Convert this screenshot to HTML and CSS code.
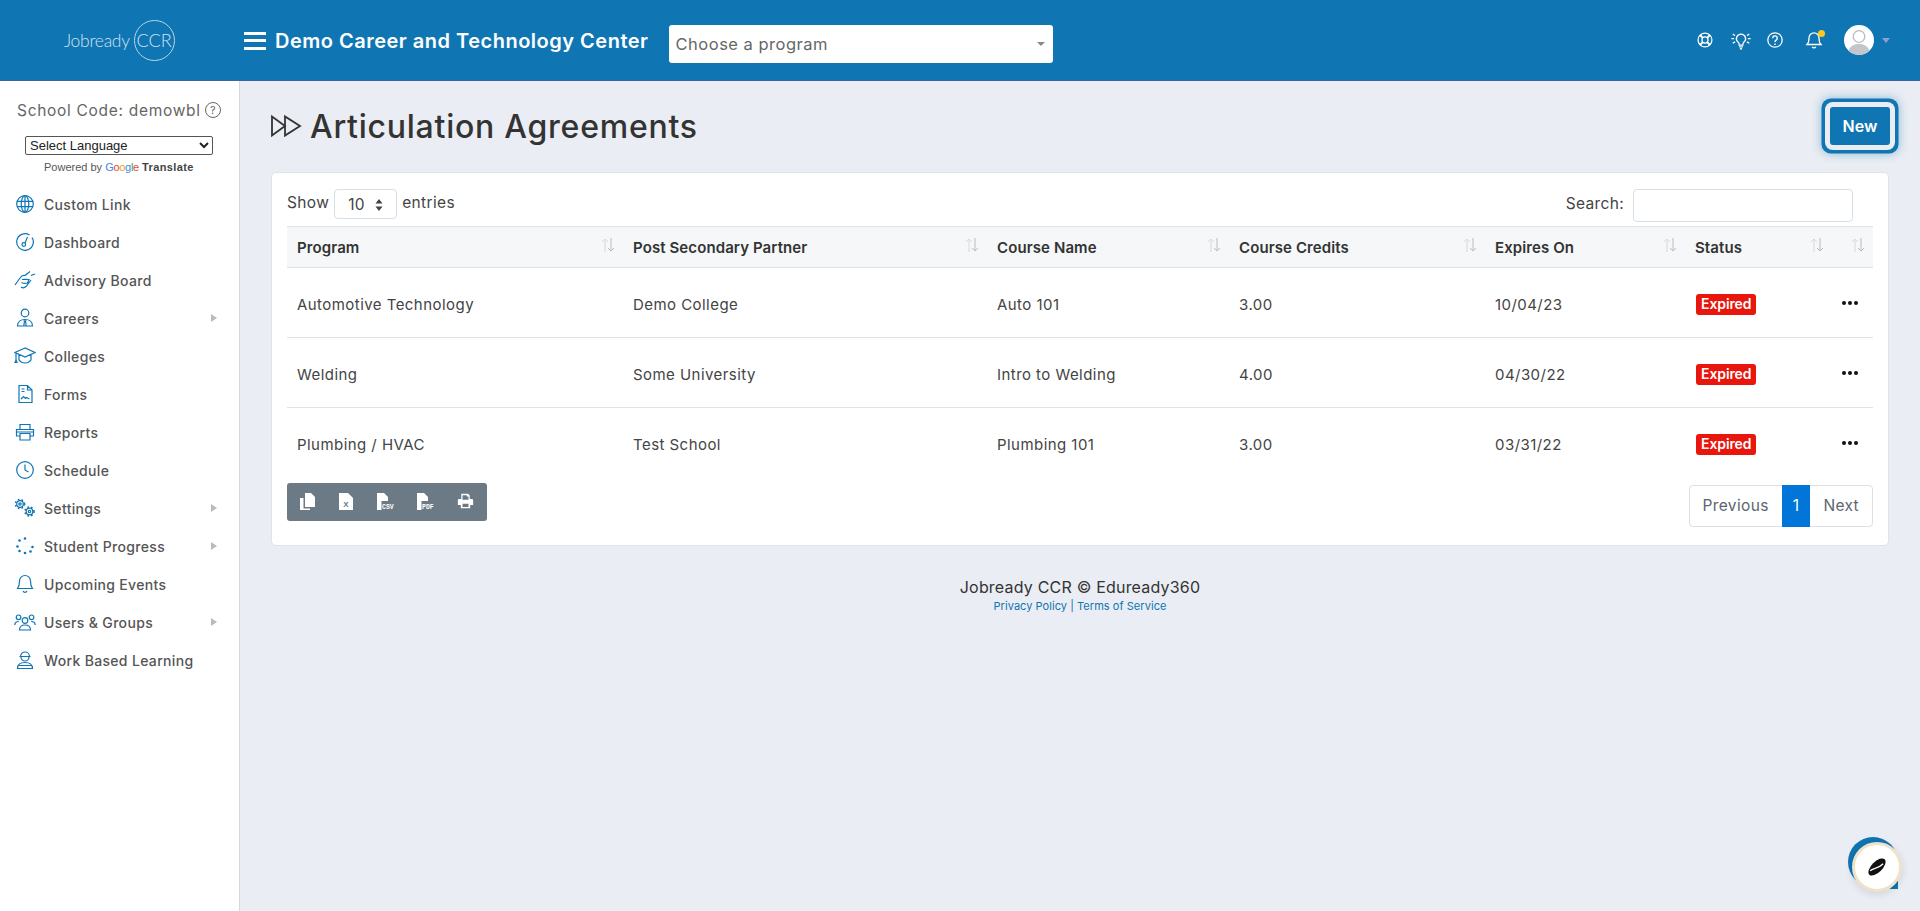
FILE: index.html
```html
<!DOCTYPE html>
<html lang="en">
<head>
  <meta charset="UTF-8">
  <meta name="viewport" content="width=device-width, initial-scale=1.0">
  <title>Articulation Agreements</title>
  <link rel="stylesheet" href="styles.css">
</head>
<body>
  <svg class="defs" width="0" height="0">
    <symbol id="sort" viewBox="0 0 14 16"><path class="sort-up" d="M4 15V2M1 5 4 2l3 3"/><path class="sort-down" d="M10 1v13M7 11l3 3 3-3"/></symbol>
    <symbol id="caret" viewBox="0 0 6 8"><path d="M0 0l6 4-6 4z"/></symbol>
  </svg>

  <header class="topbar">
    <div class="logo">
      <span class="logo-name">Jobready</span>
      <span class="logo-ring">CCR</span>
    </div>
    <div class="hamburger"><span></span><span></span><span></span></div>
    <h1 class="school-name">Demo Career and Technology Center</h1>
    <div class="program-select">
      <span>Choose a program</span>
      <i class="down"></i>
    </div>
    <div class="top-icons">
      <svg class="top-icon" viewBox="0 0 20 20"><circle cx="10" cy="10" r="7.700"/><circle cx="10" cy="10" r="3.400"/><path d="M4.600 4.600l3 3M15.400 4.600l-3 3M4.600 15.400l3-3M15.400 15.400l-3-3" stroke-width="2.200"/></svg>
      <svg class="top-icon bulb" viewBox="0 0 24 20"><path d="M12 3a5 5 0 0 0-3 9c.8.700 1 1.500 1 3h4c0-1.500.2-2.300 1-3a5 5 0 0 0-3-9zM10 17h4M10.800 19h2.400M3 3l2.500 1.500M1.500 8h3M3 13l2.500-1.500M21 3l-2.500 1.500M22.500 8h-3M21 13l-2.500-1.500"/></svg>
      <svg class="top-icon" viewBox="0 0 20 20"><circle cx="10" cy="10" r="8"/><path d="M7.500 8a2.500 2.500 0 1 1 3.800 2.100c-.9.600-1.300 1-1.300 2" stroke-width="1.600"/><path d="M10 14v1.500" stroke-width="1.600"/></svg>
      <span class="bell-wrap">
        <svg class="top-icon" viewBox="0 0 20 20"><path d="M10 2a5.500 5.500 0 0 0-5.500 5.500c0 4-.8 6-2.300 7.500h15.600c-1.500-1.500-2.300-3.500-2.300-7.500A5.500 5.500 0 0 0 10 2zM8 17.500a2.200 2.200 0 0 0 4 0"/></svg>
        <i class="bell-dot"></i>
      </span>
      <span class="avatar">
        <svg viewBox="0 0 30 30"><circle cx="15" cy="15" r="15" fill="#fff"/><circle cx="15" cy="11.500" r="5.800" fill="none" stroke="#b9bcc0" stroke-width="1.300"/><path d="M4.500 25.500c2-5 6-6.500 10.500-6.500s8.500 1.500 10.500 6.500A15 15 0 0 1 15 30a15 15 0 0 1-10.500-4.500z" fill="#c3c6ca"/></svg>
      </span>
      <i class="avatar-caret"></i>
    </div>
  </header>

  <div class="layout">
    <aside class="sidebar">
      <div class="school-code">School Code: demowbl <span class="q-mark">?</span></div>
      <select class="lang-select"><option>Select Language</option></select>
      <div class="powered">Powered by <span class="google"><span class="g-b">G</span><span class="g-r">o</span><span class="g-y">o</span><span class="g-b">g</span><span class="g-g">l</span><span class="g-r">e</span></span> <b class="translate">Translate</b></div>
      <nav class="side-nav">
        <a class="nav-item">
          <svg class="nav-icon" viewBox="0 0 22 20"><circle cx="11" cy="10" r="8.300"/><ellipse cx="11" cy="10" rx="3.800" ry="8.300"/><path d="M3 7.300h16M3 12.700h16M11 1.700v16.600"/></svg>
          Custom Link</a>
        <a class="nav-item">
          <svg class="nav-icon" viewBox="0 0 22 20"><path d="M15.500 3A8.300 8.300 0 1 0 18 5.500"/><circle cx="9.800" cy="12.500" r="1.800"/><path d="M11 11 13.500 5"/></svg>
          Dashboard</a>
        <a class="nav-item">
          <svg class="nav-icon" viewBox="0 0 22 20"><path d="M1 15 6 8c1-1.500 3-3 5-2.500l5-4M7 17c2 1.500 4 .5 5.500-1L17 10M8 9.500c2-.5 4 0 7 0l-1.500 3.500c-1.500.5-4 .5-6-.5M17 5.500l4-1.500"/></svg>
          Advisory Board</a>
        <a class="nav-item has-sub">
          <svg class="nav-icon" viewBox="0 0 22 20"><circle cx="11" cy="5" r="3.800"/><path d="M3.500 18c0-4 3-6.500 7.500-6.500s7.500 2.500 7.500 6.500zM9.500 11.500l1.500 2 1.500-2M9.800 18l.6-4.500h1.200l.6 4.500"/></svg>
          Careers<svg class="nav-caret"><use href="#caret"/></svg></a>
        <a class="nav-item">
          <svg class="nav-icon" viewBox="0 0 22 20"><path d="M11 2 1 6.500 11 11l10-4.500zM5 8.500V14c1.500 2 3.800 3 6 3s4.500-1 6-3V8.500M2 7v7M1 16.500l1-2.500 1 2.500z"/></svg>
          Colleges</a>
        <a class="nav-item">
          <svg class="nav-icon" viewBox="0 0 22 20"><path d="M5 1.500h8.500L18 6v12.500H5zM13.500 1.500V6H18M7.500 5h3M7.500 7.500h3M7 15l2.500-2.500 2 2 1-1 3 1.500"/></svg>
          Forms</a>
        <a class="nav-item">
          <svg class="nav-icon" viewBox="0 0 22 20"><path d="M6 7V2.500h10V7M6 14H2.500V7.500h17V14H16M6 11.500h10V18H6zM2.500 10h17"/></svg>
          Reports</a>
        <a class="nav-item">
          <svg class="nav-icon" viewBox="0 0 22 20"><circle cx="11" cy="10" r="8.300"/><path d="M11 4.500V10l3.500 2"/></svg>
          Schedule</a>
        <a class="nav-item has-sub">
          <svg class="nav-icon" viewBox="0 0 22 20"><circle cx="6" cy="6" r="3.300"/><circle cx="6" cy="6" r="1.200"/><circle cx="6" cy="6" r="4.500" stroke-width="1.600" stroke-dasharray="1.600 2.100"/><circle cx="15.500" cy="13.500" r="3.300"/><circle cx="15.500" cy="13.500" r="1.200"/><circle cx="15.500" cy="13.500" r="4.500" stroke-width="1.600" stroke-dasharray="1.600 2.100"/></svg>
          Settings<svg class="nav-caret"><use href="#caret"/></svg></a>
        <a class="nav-item has-sub">
          <svg class="nav-icon dots" viewBox="0 0 22 20"><circle cx="11" cy="2.500" r="1.300"/><circle cx="5.500" cy="4.500" r="1.300"/><circle cx="3.500" cy="10.500" r="1.300"/><circle cx="18.500" cy="11" r="1.300"/><circle cx="5.500" cy="15" r="1.300"/><circle cx="16.500" cy="15.500" r="1.300"/><circle cx="11" cy="17" r="1.300"/></svg>
          Student Progress<svg class="nav-caret"><use href="#caret"/></svg></a>
        <a class="nav-item">
          <svg class="nav-icon" viewBox="0 0 22 20"><path d="M11 1.500A5.500 5.500 0 0 0 5.500 7c0 4-.8 6-2 7.500h15c-1.200-1.500-2-3.500-2-7.500A5.500 5.500 0 0 0 11 1.500zM9 17a2.200 2.200 0 0 0 4 0"/></svg>
          Upcoming Events</a>
        <a class="nav-item has-sub">
          <svg class="nav-icon" viewBox="0 0 22 20"><circle cx="11" cy="8.500" r="2.800"/><path d="M5.500 18c0-3.500 2-5 5.500-5s5.500 1.500 5.500 5zM4.500 3a2.300 2.300 0 1 0 .1 4.600A2.300 2.300 0 0 0 4.500 3zM17.500 3a2.300 2.300 0 1 0 .1 4.600A2.300 2.300 0 0 0 17.500 3zM.800 13c0-2 1.500-3.500 4-3.500M21.200 13c0-2-1.500-3.500-4-3.500"/></svg>
          Users &amp; Groups<svg class="nav-caret"><use href="#caret"/></svg></a>
        <a class="nav-item">
          <svg class="nav-icon" viewBox="0 0 22 20"><path d="M6.500 6.500a4.500 4.500 0 0 1 9 0zM5.500 6.500h11M7 7a4 4 0 0 0 8 0M3.500 18.500c0-4 3-6 7.500-6s7.500 2 7.500 6zM4 15.500h14"/></svg>
          Work Based Learning</a>
      </nav>
    </aside>

    <main class="content">
      <div class="page-head">
        <h2 class="page-title">
          <svg class="title-icon" viewBox="0 0 32 24"><path d="M2 2.500v19L15 12zM15 2.500v19L30 12z"/></svg>
          Articulation Agreements
        </h2>
        <button class="new-btn">New</button>
      </div>

      <section class="card">
        <div class="table-tools">
          <label class="entries">Show
            <span class="entries-select">10<svg class="updown" viewBox="0 0 8 12"><path d="M4 0l3.500 4.500h-7zM4 12 .5 7.500h7z"/></svg></span>
            entries</label>
          <label class="search">Search: <input type="text" class="search-input"></label>
        </div>

        <table class="data-table">
          <colgroup>
            <col class="c1"><col class="c2"><col class="c3"><col class="c4"><col class="c5"><col class="c6"><col class="c7">
          </colgroup>
          <thead>
            <tr>
              <th><div class="th-in">Program<svg class="sort"><use href="#sort"/></svg></div></th>
              <th><div class="th-in">Post Secondary Partner<svg class="sort"><use href="#sort"/></svg></div></th>
              <th><div class="th-in">Course Name<svg class="sort"><use href="#sort"/></svg></div></th>
              <th><div class="th-in">Course Credits<svg class="sort"><use href="#sort"/></svg></div></th>
              <th><div class="th-in">Expires On<svg class="sort"><use href="#sort"/></svg></div></th>
              <th><div class="th-in">Status<svg class="sort"><use href="#sort"/></svg></div></th>
              <th><div class="th-in"><svg class="sort"><use href="#sort"/></svg></div></th>
            </tr>
          </thead>
          <tbody>
            <tr>
              <td>Automotive Technology</td><td>Demo College</td><td>Auto 101</td><td>3.00</td><td>10/04/23</td>
              <td><span class="badge">Expired</span></td>
              <td><span class="more"><i></i><i></i><i></i></span></td>
            </tr>
            <tr>
              <td>Welding</td><td>Some University</td><td>Intro to Welding</td><td>4.00</td><td>04/30/22</td>
              <td><span class="badge">Expired</span></td>
              <td><span class="more"><i></i><i></i><i></i></span></td>
            </tr>
            <tr>
              <td>Plumbing / HVAC</td><td>Test School</td><td>Plumbing 101</td><td>3.00</td><td>03/31/22</td>
              <td><span class="badge">Expired</span></td>
              <td><span class="more"><i></i><i></i><i></i></span></td>
            </tr>
          </tbody>
        </table>

        <div class="table-foot">
          <div class="export-btns">
            <svg class="export e-copy" viewBox="0 0 15 17"><path d="M5 0h6l4 4v10H5z"/><path d="M0 5h3.500v10.500H10V17H0z"/></svg>
            <svg class="export e-xls" viewBox="0 0 14 17"><path d="M0 0h9l5 5v12H0z"/><text x="7" y="14" class="x-mark">X</text></svg>
            <svg class="export e-file" viewBox="0 0 16 17"><path d="M0 0h7l4 4v4H4.500v9H0z"/><text x="5" y="15.500" class="file-label">CSV</text></svg>
            <svg class="export e-file" viewBox="0 0 16 17"><path d="M0 0h7l4 4v4H4.500v9H0z"/><text x="5" y="15.500" class="file-label">PDF</text></svg>
            <svg class="export e-print" viewBox="0 0 20 20"><path fill-rule="evenodd" d="M5 1h8l2 2v4h2.500A1.500 1.500 0 0 1 19 8.500V14h-3.500v4h-11v-4H1V8.500A1.500 1.500 0 0 1 2.500 7H5zm1.500 1.500V8h7V4h-2V2.500zm0 10v4h7v-4z"/></svg>
          </div>
          <div class="pager">
            <a class="page-link">Previous</a>
            <a class="page-link active">1</a>
            <a class="page-link">Next</a>
          </div>
        </div>
      </section>

      <footer class="page-foot">
        <div class="copy">Jobready CCR © Eduready360</div>
        <div class="foot-links"><a>Privacy Policy</a> | <a>Terms of Service</a></div>
      </footer>
    </main>
  </div>

  <div class="chat-widget">
    <i class="chat-back"></i>
    <i class="chat-tail"></i>
    <span class="chat-front">
      <svg viewBox="0 0 24 24"><g transform="rotate(45 12 12)"><ellipse cx="12" cy="12" rx="6.500" ry="13"/><path d="M9.500 21c0-5 5-7 5-17" fill="none" stroke="#fff" stroke-width="1.600"/></g></svg>
    </span>
  </div>
</body>
</html>
```
FILE: styles.css
```css
* {
  box-sizing: border-box;
  margin: 0;
  padding: 0;
}

html, body {
  height: 100%;
  overflow: hidden;
}

body {
  font-family: Inter, "Open Sans", sans-serif;
  background-color: #eaedf3;
  color: #333;
  display: flex;
  flex-direction: column;
}

.defs {
  position: absolute;
}

/* top bar */
.topbar {
  height: 81px;
  flex-shrink: 0;
  background-color: #0f75b3;
  border-bottom: 1px solid #3f5fa5;
  display: flex;
  align-items: center;
  color: #fff;
}

.logo {
  width: 244px;
  padding-left: 64px;
  display: flex;
  align-items: center;
  color: #cfe3f0;
  font-family: Lato, sans-serif;
  font-weight: 300;
}

.logo-name {
  font-size: 17.500px;
  letter-spacing: -0.3px;
}

.logo-ring {
  width: 41px;
  height: 41px;
  flex-shrink: 0;
  margin-left: 4px;
  border: 1px solid #b6d5e8;
  border-radius: 50%;
  display: flex;
  align-items: center;
  justify-content: center;
  font-size: 18px;
}

.hamburger {
  width: 22px;
  margin-top: 1px;
  display: flex;
  flex-direction: column;
  gap: 4.500px;
}

.hamburger span {
  height: 3px;
  background-color: #fff;
}

.school-name {
  margin: 2px 0 0 9px;
  font-size: 20px;
  font-weight: 600;
  letter-spacing: 0.5px;
  white-space: nowrap;
}

.program-select {
  width: 384px;
  height: 38px;
  margin: 8px 0 0 20px;
  padding: 0 8px 0 7px;
  background-color: #fff;
  border-radius: 3px;
  color: #666;
  font-size: 16.500px;
  letter-spacing: 0.5px;
  display: flex;
  align-items: center;
  justify-content: space-between;
}

.down {
  width: 0;
  height: 0;
  border-left: 4px solid transparent;
  border-right: 4px solid transparent;
  border-top: 4px solid #888;
}

.top-icons {
  margin-left: auto;
  padding-right: 30px;
  display: flex;
  align-items: center;
}

.top-icon {
  width: 18px;
  height: 18px;
  margin-right: 16px;
  fill: none;
  stroke: #fff;
  stroke-width: 1.400;
  display: block;
}

.top-icon.bulb {
  width: 22px;
  height: 19px;
  margin-right: 14px;
}

.bell-wrap {
  position: relative;
  margin-left: 5px;
  margin-right: 21px;
}

.bell-wrap .top-icon {
  margin-right: 0;
}

.bell-dot {
  position: absolute;
  top: -1px;
  right: -2px;
  width: 7px;
  height: 7px;
  border-radius: 50%;
  background-color: #ffc820;
}

.avatar {
  width: 30px;
  height: 30px;
  display: block;
}

.avatar svg {
  display: block;
}

.avatar-caret {
  width: 0;
  height: 0;
  margin-left: 8px;
  border-left: 4px solid transparent;
  border-right: 4px solid transparent;
  border-top: 5px solid #8f9fd6;
}

.layout {
  flex: 1;
  display: flex;
  min-height: 0;
}

/* sidebar */
.sidebar {
  width: 240px;
  flex-shrink: 0;
  background-color: #fff;
  border-right: 1px solid #d3dae2;
  padding-top: 19px;
}

.school-code {
  padding-left: 17px;
  font-size: 15.500px;
  letter-spacing: 0.7px;
  color: #666;
  display: flex;
  align-items: center;
  gap: 4px;
  white-space: nowrap;
  height: 20px;
}

.q-mark {
  width: 16px;
  height: 16px;
  border: 1px solid #666;
  border-radius: 50%;
  font-size: 11px;
  letter-spacing: 0;
  line-height: 14px;
  text-align: center;
}

.lang-select {
  display: block;
  width: 188px;
  height: 19px;
  margin: 16px 0 0 25px;
  font-family: "Liberation Sans", sans-serif;
  font-size: 13px;
  color: #222;
  background-color: #fff;
  border: 1px solid #555;
  border-radius: 2px;
}

.powered {
  margin: 4px 0 0 0;
  padding-left: 44px;
  font-family: "Liberation Sans", sans-serif;
  font-size: 11px;
  color: #555;
  white-space: nowrap;
  line-height: 16px;
}

.translate {
  color: #444;
  letter-spacing: 0.4px;
}

.google {
  font-weight: 400;
  letter-spacing: -0.3px;
}

.g-b { color: #4285f4; }
.g-r { color: #ea4335; }
.g-y { color: #d4a90a; }
.g-g { color: #34a853; }

.side-nav {
  margin-top: 10px;
  display: flex;
  flex-direction: column;
}

.nav-item {
  height: 38px;
  padding-left: 14px;
  display: flex;
  align-items: center;
  font-size: 14px;
  font-weight: 500;
  letter-spacing: 0.33px;
  color: #555;
  white-space: nowrap;
}

.nav-icon {
  width: 22px;
  height: 20px;
  margin-right: 8px;
  fill: none;
  stroke: #0f75b3;
  stroke-width: 1.200;
  flex-shrink: 0;
}

.nav-icon.dots {
  fill: #0f75b3;
  stroke: none;
}

.nav-caret {
  width: 6px;
  height: 8px;
  margin-left: auto;
  margin-right: 22px;
  fill: #b5bbc2;
}

/* main column */
.content {
  flex: 1;
  min-width: 0;
  padding: 18px 31px 0 31px;
}

.page-head {
  height: 73px;
  display: flex;
  align-items: flex-start;
  justify-content: space-between;
}

.page-title {
  height: 54px;
  margin-left: -1px;
  display: flex;
  align-items: center;
  gap: 8px;
  font-size: 32px;
  font-weight: 500;
  color: #333;
  letter-spacing: 0.75px;
}

.title-icon {
  width: 32px;
  height: 24px;
  fill: none;
  stroke: #333;
  stroke-width: 1.800;
}

.new-btn {
  width: 60px;
  height: 38px;
  margin: 8px -1px 0 0;
  background-color: #0f75b3;
  color: #fff;
  border: none;
  border-radius: 3px;
  font-family: inherit;
  font-size: 16px;
  font-weight: 600;
  box-shadow: 0 0 0 5px #eaedf3, 0 0 0 8.500px #0f75b3, 0 0 10px 9px rgba(15, 117, 179, 0.4);
}

.card {
  height: 374px;
  background-color: #fff;
  border: 1px solid #dde3ea;
  border-radius: 5px;
  padding: 16px 15px 0 15px;
}

.table-tools {
  height: 37px;
  display: flex;
  justify-content: space-between;
  font-size: 15.500px;
  letter-spacing: 0.35px;
  color: #444;
}

.entries {
  display: flex;
  align-items: flex-start;
  gap: 5px;
  line-height: 28px;
}

.entries-select {
  width: 63px;
  height: 30px;
  padding: 1px 13px 0 13px;
  border: 1px solid #d5e0e8;
  border-radius: 4px;
  display: flex;
  align-items: center;
  justify-content: space-between;
}

.updown {
  width: 8px;
  height: 12px;
  fill: #444;
}

.search {
  display: flex;
  align-items: flex-start;
  gap: 9px;
  padding-right: 20px;
  line-height: 30px;
}

.search-input {
  width: 220px;
  height: 33px;
  border: 1px solid #d5e0e8;
  border-radius: 4px;
}

/* table */
.data-table {
  width: 1586px;
  table-layout: fixed;
  border-collapse: collapse;
  font-size: 15px;
  letter-spacing: 0.45px;
}

.c1 { width: 336px; }
.c2 { width: 364px; }
.c3 { width: 242px; }
.c4 { width: 256px; }
.c5 { width: 200px; }
.c6 { width: 147px; }
.c7 { width: 41px; }

.data-table thead tr {
  height: 41px;
  background-color: #f5f7f9;
  border-top: 1px solid #dde3ea;
  border-bottom: 1px solid #dde3ea;
}

.data-table th {
  padding: 0 8px 0 10px;
  font-size: 15px;
  font-weight: 600;
  letter-spacing: 0.1px;
  text-align: left;
  color: #333;
}

.th-in {
  display: flex;
  align-items: center;
  justify-content: space-between;
  white-space: nowrap;
}

.sort {
  width: 14px;
  height: 16px;
  margin-top: -4px;
  margin-left: auto;
  fill: none;
  stroke-width: 1;
  flex-shrink: 0;
}

.sort-up {
  stroke: #d5d9de;
}

.sort-down {
  stroke: #b7bcc2;
}

.data-table tbody tr {
  height: 70px;
  border-bottom: 1px solid #dde3ea;
}

.data-table tbody tr:last-child {
  border-bottom: none;
}

.data-table td {
  padding: 3px 10px 0;
  color: #444;
  white-space: nowrap;
}

.badge {
  display: inline-block;
  margin-left: 1px;
  padding: 0 5px;
  height: 21px;
  line-height: 20px;
  background-color: #e8160c;
  color: #fff;
  font-size: 14px;
  font-weight: 600;
  border-radius: 3px;
  letter-spacing: -0.1px;
}

.more {
  display: flex;
  gap: 2px;
  margin-top: -3px;
}

.more i {
  width: 4px;
  height: 4px;
  border-radius: 50%;
  background-color: #111;
}

.table-foot {
  margin-top: 5px;
  display: flex;
  justify-content: space-between;
}

.export-btns {
  width: 200px;
  height: 38px;
  padding-left: 13px;
  background-color: #6c7a85;
  border-radius: 3px;
  display: flex;
  align-items: center;
  gap: 24px;
}

.export {
  height: 17px;
  fill: #fff;
  flex-shrink: 0;
  overflow: visible;
}

.e-copy { width: 15px; }
.e-xls { width: 14px; }
.e-file { width: 16px; }
.e-print { width: 17px; }

.x-mark {
  font-family: "Liberation Sans", sans-serif;
  font-size: 8px;
  font-weight: 700;
  text-anchor: middle;
  fill: #6c7a85;
}

.file-label {
  font-family: "Liberation Mono", monospace;
  font-size: 6.500px;
  font-weight: 700;
  fill: #fff;
}

.pager {
  margin-top: 2px;
  height: 42px;
  display: flex;
  border: 1px solid #dcdfe4;
  border-radius: 4px;
  font-size: 15.500px;
  letter-spacing: 0.35px;
  color: #5c6670;
}

.page-link {
  padding: 0 13px;
  display: flex;
  align-items: center;
}

.page-link.active {
  margin: -1px 0;
  padding: 0 11px;
  background-color: #0275d8;
  color: #fff;
}

.page-foot {
  margin-top: 30px;
  text-align: center;
}

.copy {
  font-size: 16px;
  letter-spacing: 0.2px;
  line-height: 22px;
  color: #333;
}

.foot-links {
  font-size: 11px;
  letter-spacing: 0.05px;
  line-height: 16px;
  color: #0f75b3;
}

/* chat bubble, floats over the page */
.chat-widget {
  position: fixed;
  right: 18px;
  bottom: 19px;
  width: 54px;
  height: 55px;
}

.chat-back {
  position: absolute;
  left: 0;
  top: 0;
  width: 50px;
  height: 50px;
  border-radius: 50%;
  background-color: #0f75b3;
}

.chat-tail {
  position: absolute;
  right: 4px;
  bottom: 3px;
  width: 8px;
  height: 8px;
  background-color: #0f75b3;
}

.chat-front {
  position: absolute;
  right: 0;
  bottom: 0;
  width: 50px;
  height: 50px;
  border-radius: 50%;
  background-color: #fff;
  border: 3px solid #efe2ca;
  box-shadow: 0 2px 8px rgba(0, 0, 0, 0.12);
  display: flex;
  align-items: center;
  justify-content: center;
}

.chat-front svg {
  width: 20px;
  height: 20px;
  fill: #111;
}
```
